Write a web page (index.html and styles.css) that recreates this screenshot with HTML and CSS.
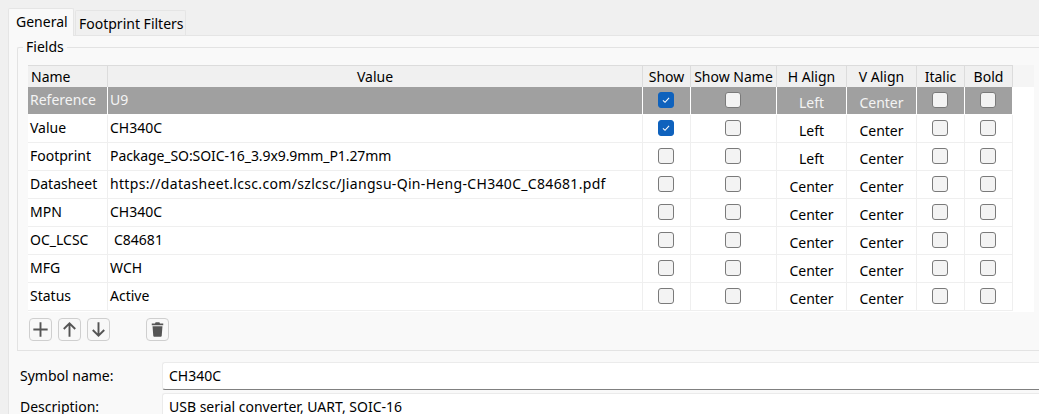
FILE: index.html
```html
<!DOCTYPE html>
<html lang="en">
<head>
<meta charset="utf-8">
<title>Symbol Properties</title>
<link rel="stylesheet" href="styles.css">
</head>
<body>
<div class="tabs">
  <div class="tab active">General</div>
  <div class="tab">Footprint Filters</div>
</div>
<div class="panel">
  <fieldset class="group">
    <legend>Fields</legend>
    <div class="grid-wrap">
      <table class="grid">
        <colgroup>
          <col class="c-name"><col class="c-value"><col class="c-show"><col class="c-showname"><col class="c-halign"><col class="c-valign"><col class="c-italic"><col class="c-bold">
        </colgroup>
        <thead>
          <tr><th class="first">Name</th><th>Value</th><th>Show</th><th>Show Name</th><th>H Align</th><th>V Align</th><th>Italic</th><th>Bold</th></tr>
        </thead>
        <tbody>
          <tr class="selected"><td>Reference</td><td>U9</td><td class="cc"><span class="cb on"><svg viewBox="0 0 16 16"><path d="M4.500 8.300l2.400 2.300 4.600-5"/></svg></span></td><td class="cc"><span class="cb"></span></td><td class="al">Left</td><td class="al">Center</td><td class="cc"><span class="cb"></span></td><td class="cc"><span class="cb"></span></td></tr>
          <tr><td>Value</td><td>CH340C</td><td class="cc"><span class="cb on"><svg viewBox="0 0 16 16"><path d="M4.500 8.300l2.400 2.300 4.600-5"/></svg></span></td><td class="cc"><span class="cb"></span></td><td class="al">Left</td><td class="al">Center</td><td class="cc"><span class="cb"></span></td><td class="cc"><span class="cb"></span></td></tr>
          <tr><td>Footprint</td><td class="pkg">Package_SO:SOIC-16_3.9x9.9mm_P1.27mm</td><td class="cc"><span class="cb"></span></td><td class="cc"><span class="cb"></span></td><td class="al">Left</td><td class="al">Center</td><td class="cc"><span class="cb"></span></td><td class="cc"><span class="cb"></span></td></tr>
          <tr><td>Datasheet</td><td class="url">https://datasheet.lcsc.com/szlcsc/Jiangsu-Qin-Heng-CH340C_C84681.pdf</td><td class="cc"><span class="cb"></span></td><td class="cc"><span class="cb"></span></td><td class="al">Center</td><td class="al">Center</td><td class="cc"><span class="cb"></span></td><td class="cc"><span class="cb"></span></td></tr>
          <tr><td>MPN</td><td>CH340C</td><td class="cc"><span class="cb"></span></td><td class="cc"><span class="cb"></span></td><td class="al">Center</td><td class="al">Center</td><td class="cc"><span class="cb"></span></td><td class="cc"><span class="cb"></span></td></tr>
          <tr><td>OC_LCSC</td><td class="ind">C84681</td><td class="cc"><span class="cb"></span></td><td class="cc"><span class="cb"></span></td><td class="al">Center</td><td class="al">Center</td><td class="cc"><span class="cb"></span></td><td class="cc"><span class="cb"></span></td></tr>
          <tr><td>MFG</td><td>WCH</td><td class="cc"><span class="cb"></span></td><td class="cc"><span class="cb"></span></td><td class="al">Center</td><td class="al">Center</td><td class="cc"><span class="cb"></span></td><td class="cc"><span class="cb"></span></td></tr>
          <tr><td>Status</td><td>Active</td><td class="cc"><span class="cb"></span></td><td class="cc"><span class="cb"></span></td><td class="al">Center</td><td class="al">Center</td><td class="cc"><span class="cb"></span></td><td class="cc"><span class="cb"></span></td></tr>
        </tbody>
      </table>
    </div>
    <div class="toolbar">
      <button class="tool" aria-label="Add"><svg viewBox="0 0 22 22"><path d="M11 3.500v15M3.500 11h15"/></svg></button>
      <button class="tool" aria-label="Up"><svg viewBox="0 0 22 22"><path d="M11 18.500V4.500M5 10.500l6-6 6 6"/></svg></button>
      <button class="tool" aria-label="Down"><svg viewBox="0 0 22 22"><path d="M11 3.500v14M5 11.500l6 6 6-6"/></svg></button>
      <button class="tool del" aria-label="Delete"><svg viewBox="0 0 22 22"><path class="fill" d="M9 3.500h4l.6 1.200H17v1.800H5V4.700h3.400zM5.800 7.500h10.400l-.8 10.200a1 1 0 0 1-1 .8H7.600a1 1 0 0 1-1-.8z"/></svg></button>
    </div>
  </fieldset>
  <div class="form">
    <div class="row"><label>Symbol name:</label><div class="input">CH340C</div></div>
    <div class="row"><label>Description:</label><div class="input">USB serial converter, UART, SOIC-16</div></div>
  </div>
</div>
</body>
</html>
```
FILE: styles.css
```css
* { box-sizing: border-box; }
html, body { margin: 0; padding: 0; }
body {
  width: 1039px; height: 414px; overflow: hidden;
  background: #f0f0f0;
  font-family: "Noto Sans", "Open Sans", sans-serif;
  font-size: 14px; color: #000;
  padding: 8px 0 0 8px;
}
.tabs { display: flex; height: 27px; align-items: flex-end; position: relative; z-index: 1; }
.tab {
  height: 25px; padding: 0 3px 0 3px; margin-left: 1px;
  background: #f0f0f0; border: 1px solid #e5e5e5; border-bottom: 0;
  font-size: 14px; line-height: 25px; white-space: nowrap;
  width: 111px; border-radius: 2px 2px 0 0;
}
.tab.active {
  width: 66px; height: 28px; margin-left: 0; padding-left: 7px;
  background: #f9f9f9; line-height: 25px; margin-bottom: -1px;
}
.panel { background: #f9f9f9; border: 1px solid #e5e5e5; border-right: 0; border-bottom: 0; height: 379px; padding: 1px 0 0 8px; }
.group {
  margin: 0; padding: 0 0 0 10px; min-width: 0;
  border: 1px solid #e3e3e3; border-right: 0;
  height: 314px; border-top-left-radius: 2px;
}
.group legend { padding: 0 3px; margin-left: -5px; font-size: 14px; line-height: 20px; height: 20px; }
.grid-wrap { background: linear-gradient(#f5f5f5 22px, #fff 22px); width: 1006px; height: 247px; margin-top: 8px; }
.grid { border-collapse: separate; border-spacing: 0; table-layout: fixed; width: 985px; }
.c-name { width: 80px; } .c-value { width: 535px; } .c-show { width: 48px; } .c-showname { width: 86px; }
.c-halign { width: 70px; } .c-valign { width: 70px; } .c-italic { width: 48px; } .c-bold { width: 48px; }
.grid th {
  height: 22px; padding: 0; font-weight: 400; background: #f0f0f0;
  border-top: 1px solid #dcdcdc; border-right: 1px solid #dcdcdc;
  text-align: center; line-height: 20px; overflow: hidden; white-space: nowrap;
}
.grid th.first { text-align: left; padding-left: 3px; }
.grid td {
  height: 28px; padding: 0 2px 3px 2px; border-right: 1px solid #efefef; border-bottom: 1px solid #efefef;
  white-space: nowrap; overflow: hidden;
}
.grid td.ind { padding-left: 6px; }
.grid td.url { letter-spacing: .32px; }
.grid td.pkg { letter-spacing: -.08px; }
.grid td.cc { text-align: center; padding: 0 1px 5px 0; }
.grid td.al { text-align: center; padding: 3px 0 0; }
.selected td { background: #a0a0a0; color: #f4f4f4; border-bottom-color: #fff; border-right-color: #fff; }
.cb {
  display: inline-block; width: 16px; height: 16px; vertical-align: middle;
  background: #f3f3f3; border: 1px solid #7a7a7a; border-radius: 3px;
}
.cb.on { background: #0f62bd; border-color: #0f62bd; }
.cb svg { display: block; width: 14px; height: 14px; fill: none; stroke: #fff; stroke-width: 1.2; }
.toolbar { display: flex; gap: 6px; padding: 6px 0 0 1px; }
.tool {
  width: 23px; height: 23px; padding: 0; background: #f8f8f8;
  border: 1px solid #cfcfcf; border-radius: 4px; display: flex; align-items: center; justify-content: center;
}
.tool svg { width: 21px; height: 21px; flex: none; fill: none; stroke: #555; stroke-width: 2; }
.tool .fill { fill: #555; stroke: none; }
.del { margin-left: 30px; }
.form { padding: 11px 0 0 3px; }
.row { display: flex; align-items: flex-start; height: 31px; }
.row label { width: 142px; line-height: 28px; height: 28px; white-space: nowrap; }
.input {
  flex: 1; height: 28px; background: #fff; border: 1px solid #ebebeb; border-bottom: 1px solid #808080;
  border-right: 0; border-radius: 3px 0 0 3px; padding-left: 6px; line-height: 25px; white-space: nowrap;
}
```
